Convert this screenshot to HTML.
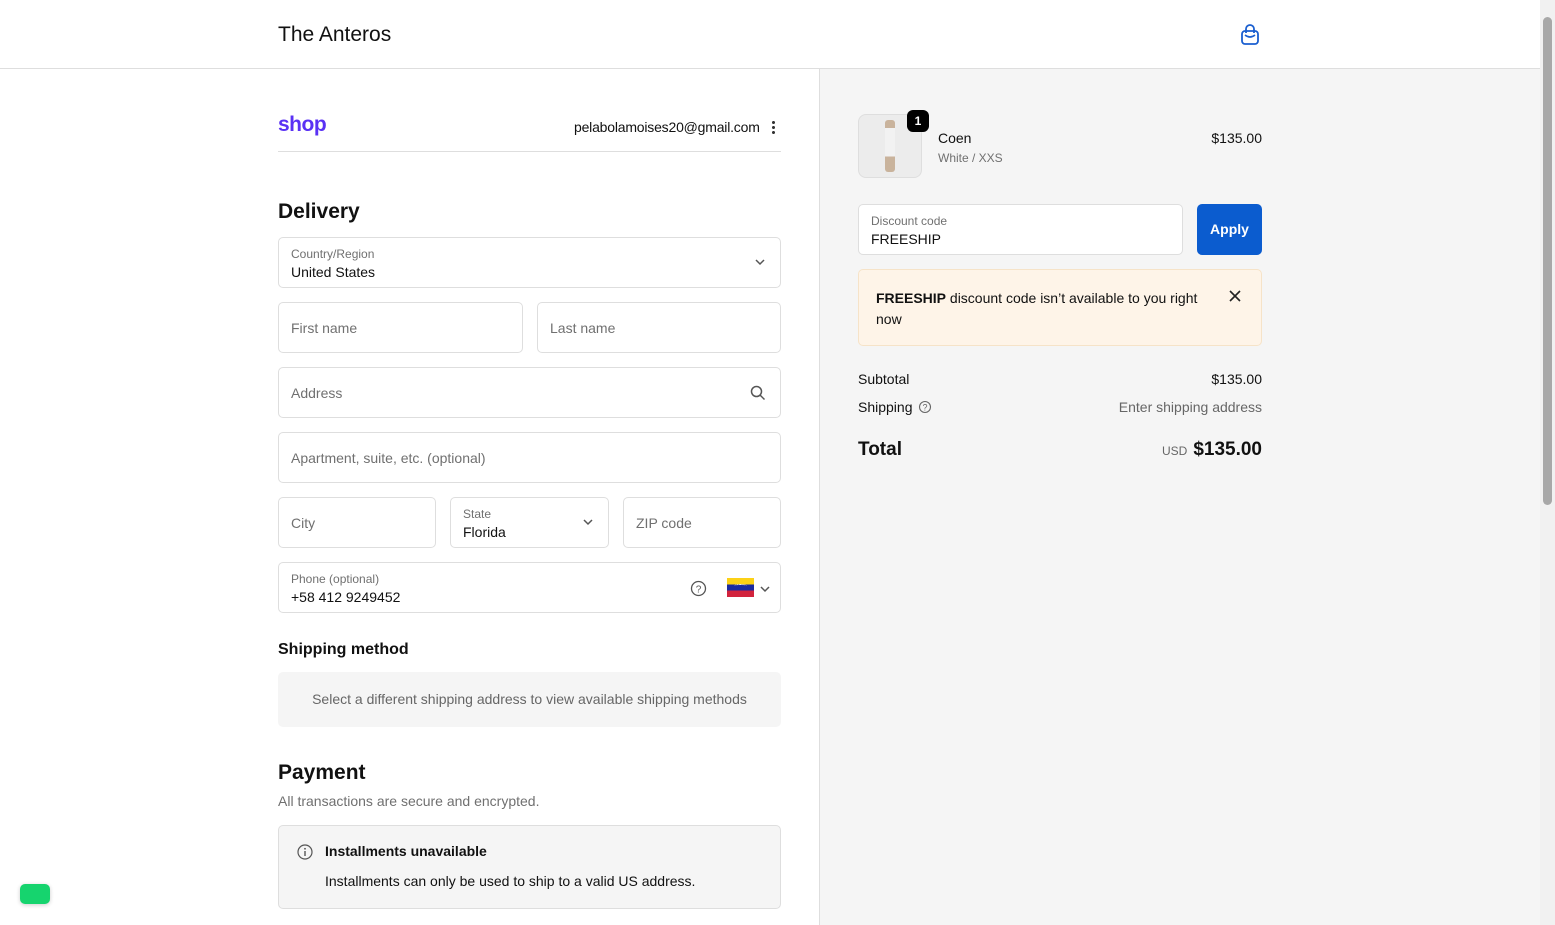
<!DOCTYPE html>
<html><head><meta charset="utf-8"><style>
*{box-sizing:border-box;margin:0;padding:0}
body{width:1555px;height:925px;overflow:hidden;font-family:"Liberation Sans",sans-serif;color:#111;background:#fff;position:relative;font-size:14px}
.abs{position:absolute}
.hdr{left:0;top:0;width:1540px;height:69px;border-bottom:1px solid #dedede;background:#fff}
.right{left:819px;top:69px;width:721px;height:856px;background:#f5f5f5;border-left:1px solid #dedede}
.sb{left:1540px;top:0;width:15px;height:925px;background:#f1f1f1}
.thumb{left:1543px;top:17px;width:9px;height:488px;background:#a8a8a8;border-radius:5px}
.f{position:absolute;border:1px solid #dedede;border-radius:5px;background:#fff;height:51px}
.ph{position:absolute;left:12px;top:17px;color:#707070;font-size:14px}
.lb{position:absolute;left:12px;top:9px;color:#707070;font-size:12px}
.vl{position:absolute;left:12px;top:26px;font-size:14px;color:#111}
.chev{position:absolute;right:14px;top:20px}
.r{position:absolute;right:293px;text-align:right;white-space:nowrap}
</style></head><body>
<div class="abs hdr"></div>
<div class="abs" style="left:278px;top:23px;font-size:21px">The Anteros</div>
<svg class="abs" style="left:1239px;top:23px" width="22" height="23" viewBox="0 0 22 23"><rect x="3" y="8" width="16" height="13" rx="3" fill="none" stroke="#1a5fd0" stroke-width="1.8"/><path d="M7 10V6a4 4 0 0 1 8 0v4" fill="none" stroke="#1a5fd0" stroke-width="1.8"/><path d="M6 12q5 4 10 0" fill="none" stroke="#1a5fd0" stroke-width="1.6"/></svg>
<div class="abs right"></div>
<div class="abs sb"></div><div class="abs thumb"></div>

<div class="abs" style="left:278px;top:113px;font-size:21px;font-weight:bold;color:#5a31f4;letter-spacing:-0.5px">shop</div>
<div class="abs" style="left:574px;top:119px;font-size:14px;letter-spacing:-0.2px">pelabolamoises20@gmail.com</div>
<div class="abs" style="left:772px;top:120px;width:3px;height:14px;background:radial-gradient(circle,#333 1.4px,transparent 1.6px) 0 0/3px 5px"></div>
<div class="abs" style="left:278px;top:151px;width:503px;height:1px;background:#dedede"></div>

<div class="abs" style="left:278px;top:200px;font-size:21px;font-weight:bold">Delivery</div>
<div class="f" style="left:278px;top:237px;width:503px"><div class="lb">Country/Region</div><div class="vl">United States</div><svg class="chev" style="top:20px" width="12" height="8"><path d="M2 2l4 4 4-4" fill="none" stroke="#555" stroke-width="1.5"/></svg></div>
<div class="f" style="left:278px;top:302px;width:245px"><div class="ph">First name</div></div>
<div class="f" style="left:537px;top:302px;width:244px"><div class="ph">Last name</div></div>
<div class="f" style="left:278px;top:367px;width:503px"><div class="ph">Address</div><svg class="chev" style="top:17px" width="16" height="16"><circle cx="6.5" cy="6.5" r="5" fill="none" stroke="#555" stroke-width="1.5"/><path d="M10 10l4.5 4.5" stroke="#555" stroke-width="1.5"/></svg></div>
<div class="f" style="left:278px;top:432px;width:503px"><div class="ph">Apartment, suite, etc. (optional)</div></div>
<div class="f" style="left:278px;top:497px;width:158px"><div class="ph">City</div></div>
<div class="f" style="left:450px;top:497px;width:159px"><div class="lb">State</div><div class="vl">Florida</div><svg class="chev" width="12" height="8"><path d="M2 2l4 4 4-4" fill="none" stroke="#555" stroke-width="1.5"/></svg></div>
<div class="f" style="left:623px;top:497px;width:158px"><div class="ph">ZIP code</div></div>
<div class="f" style="left:278px;top:562px;width:503px"><div class="lb">Phone (optional)</div><div class="vl">+58 412 9249452</div>
<svg class="abs" style="left:411px;top:17px" width="17" height="17"><circle cx="8.5" cy="8.5" r="7" fill="none" stroke="#555" stroke-width="1.3"/><text x="8.5" y="12.5" font-size="10" text-anchor="middle" fill="#555" font-family="Liberation Sans">?</text></svg>
<div class="abs" style="left:448px;top:15px;width:27px;height:19px;background:linear-gradient(#fcd116 33%,#1a2aa0 33%,#1a2aa0 66%,#d2233d 66%)"></div>
<div class="abs" style="left:455px;top:21px;width:13px;height:4px;border-top:1px dotted #fff;border-radius:50% 50% 0 0"></div>
<svg class="abs" style="left:480px;top:22px" width="12" height="8"><path d="M2 2l4 4 4-4" fill="none" stroke="#555" stroke-width="1.5"/></svg></div>

<div class="abs" style="left:278px;top:641px;font-size:16px;font-weight:bold">Shipping method</div>
<div class="abs" style="left:278px;top:672px;width:503px;height:55px;background:#f5f5f5;border-radius:5px;color:#666;text-align:center;line-height:55px;font-size:14px">Select a different shipping address to view available shipping methods</div>

<div class="abs" style="left:278px;top:761px;font-size:21px;font-weight:bold">Payment</div>
<div class="abs" style="left:278px;top:793px;font-size:14px;color:#707070">All transactions are secure and encrypted.</div>
<div class="abs" style="left:278px;top:825px;width:503px;height:84px;background:#f5f5f5;border:1px solid #dedede;border-radius:5px"></div>
<svg class="abs" style="left:297px;top:844px" width="16" height="16"><circle cx="8" cy="8" r="7" fill="none" stroke="#555" stroke-width="1.2"/><path d="M8 7v5" stroke="#555" stroke-width="1.4"/><circle cx="8" cy="4.8" r="0.9" fill="#555"/></svg>
<div class="abs" style="left:325px;top:843px;font-size:14px;font-weight:bold">Installments unavailable</div>
<div class="abs" style="left:325px;top:873px;font-size:14px">Installments can only be used to ship to a valid US address.</div>
<div class="abs" style="left:20px;top:884px;width:30px;height:20px;background:#16d46e;border-radius:5px;box-shadow:0 1px 4px rgba(0,0,0,.2)"></div>

<div class="abs" style="left:858px;top:114px;width:64px;height:64px;border:1px solid #dedede;border-radius:8px;background:#ececec"></div>
<div class="abs" style="left:885px;top:120px;width:10px;height:52px;background:linear-gradient(#c9b39c 15%,#f2f2f2 15%,#f2f2f2 70%,#c9b39c 70%);border-radius:3px"></div>
<div class="abs" style="left:907px;top:110px;width:22px;height:22px;background:#000;color:#fff;border-radius:6px;font-size:12px;font-weight:bold;text-align:center;line-height:22px">1</div>
<div class="abs" style="left:938px;top:130px;font-size:14px">Coen</div>
<div class="abs" style="left:938px;top:151px;font-size:12px;color:#707070">White / XXS</div>
<div class="r" style="top:130px;font-size:14px">$135.00</div>

<div class="f" style="left:858px;top:204px;width:325px;height:51px"><div class="lb">Discount code</div><div class="vl">FREESHIP</div></div>
<div class="abs" style="left:1197px;top:204px;width:65px;height:51px;background:#0b5ccf;border-radius:5px;color:#fff;font-weight:bold;font-size:14px;text-align:center;line-height:51px">Apply</div>
<div class="abs" style="left:858px;top:269px;width:404px;height:77px;background:#fef4e8;border:1px solid #f6e3c8;border-radius:5px"></div>
<div class="abs" style="left:876px;top:288px;width:330px;font-size:14px;line-height:21px"><b>FREESHIP</b> discount code isn’t available to you right now</div>
<svg class="abs" style="left:1229px;top:290px" width="12" height="12"><path d="M1 1l10 10M11 1L1 11" stroke="#222" stroke-width="1.6"/></svg>

<div class="abs" style="left:858px;top:371px;font-size:14px">Subtotal</div>
<div class="r" style="top:371px;font-size:14px">$135.00</div>
<div class="abs" style="left:858px;top:399px;font-size:14px">Shipping</div>
<svg class="abs" style="left:918px;top:400px" width="14" height="14"><circle cx="7" cy="7" r="5.5" fill="none" stroke="#666" stroke-width="1.1"/><text x="7" y="10.5" font-size="9" text-anchor="middle" fill="#666" font-family="Liberation Sans">?</text></svg>
<div class="r" style="top:399px;font-size:14px;color:#666">Enter shipping address</div>
<div class="abs" style="left:858px;top:439px;font-size:19px;font-weight:bold">Total</div>
<div class="r" style="top:439px;font-size:19px;font-weight:bold"><span style="font-size:12px;font-weight:normal;color:#666;margin-right:6px">USD</span>$135.00</div>
</body></html>
